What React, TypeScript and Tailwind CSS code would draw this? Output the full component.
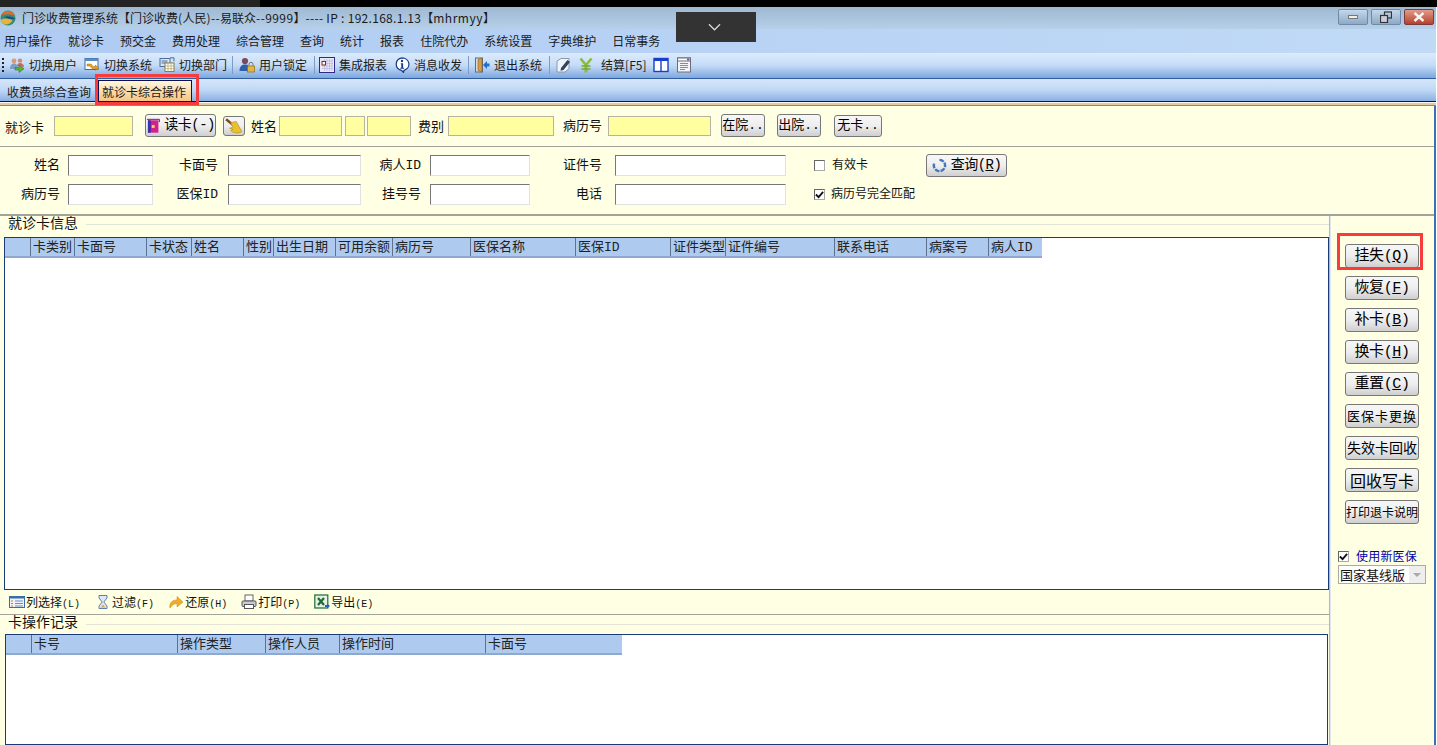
import type { ReactNode } from "react";

const menus = ["用户操作", "就诊卡", "预交金", "费用处理", "综合管理", "查询", "统计", "报表", "住院代办", "系统设置", "字典维护", "日常事务"];

const cardColumns = [
  { name: "", w: "w-[25px]" },
  { name: "卡类别", w: "w-[44px]" },
  { name: "卡面号", w: "w-[72px]" },
  { name: "卡状态", w: "w-[45px]" },
  { name: "姓名", w: "w-[52px]" },
  { name: "性别", w: "w-[30px]" },
  { name: "出生日期", w: "w-[62px]" },
  { name: "可用余额", w: "w-[57px]" },
  { name: "病历号", w: "w-[78px]" },
  { name: "医保名称", w: "w-[105px]" },
  { name: "医保ID", w: "w-[95px]" },
  { name: "证件类型", w: "w-[55px]" },
  { name: "证件编号", w: "w-[109px]" },
  { name: "联系电话", w: "w-[92px]" },
  { name: "病案号", w: "w-[62px]" },
  { name: "病人ID", w: "w-[54px]" },
];

const logColumns = [
  { name: "", w: "w-[25px]" },
  { name: "卡号", w: "w-[146px]" },
  { name: "操作类型", w: "w-[88px]" },
  { name: "操作人员", w: "w-[74px]" },
  { name: "操作时间", w: "w-[146px]" },
  { name: "卡面号", w: "w-[137px]" },
];

const sideButtons = [
  { text: "挂失", key: "Q" },
  { text: "恢复", key: "F" },
  { text: "补卡", key: "B" },
  { text: "换卡", key: "H" },
  { text: "重置", key: "C" },
];

const sideButtonsSmall = [
  { text: "医保卡更换", cls: "text-[13px] tracking-[1px]" },
  { text: "失效卡回收", cls: "text-[14px]" },
  { text: "回收写卡", cls: "text-[16px]" },
  { text: "打印退卡说明", cls: "text-[12px]" },
];

const mono = "font-['Liberation_Mono','Noto_Sans_CJK_SC',monospace]";

function Svg({ children, className = "w-4 h-4" }: { children: ReactNode; className?: string }) {
  return (
    <svg viewBox="0 0 16 16" className={`${className} shrink-0`}>
      {children}
    </svg>
  );
}

function Logo() {
  return (
    <svg viewBox="0 0 16 16" className="w-4 h-4 shrink-0">
      <circle cx="8" cy="8" r="7.500" fill="#2f8f7a" />
      <path d="M1 5 C5 -1 12 0 15.500 6 C10 3.500 6 4 1 5Z" fill="#e8692a" />
      <path d="M.5 10 C5 8 9 8 12.500 10.500 C9 16 3 16 .5 10Z" fill="#e9b23a" />
      <path d="M4 7 C8 5.500 12 6.500 15.500 9 C11 9.500 8 9 4 7Z" fill="#1e4f86" />
    </svg>
  );
}

const toolIcons: Record<string, ReactNode> = {
  user: (
    <Svg>
      <circle cx="5" cy="4" r="2.400" fill="#d99a78" />
      <circle cx="11" cy="3.600" r="2.200" fill="#d8876a" />
      <path d="M1 12c0-4 2-5.500 4-5.500s4 1.500 4 5.500z" fill="#7d9cc9" />
      <path d="M8 9c0-2 1.500-3 3-3s4 1 4 4z" fill="#c76a6a" />
      <path d="M6 10.500h4V8l5 3.800-5 3.700v-2.500H6z" fill="#58b23a" stroke="#2f7a1e" strokeWidth=".6" />
    </Svg>
  ),
  system: (
    <Svg>
      <rect x="1" y="1.500" width="13" height="11" fill="#fff" stroke="#3d6ea8" />
      <rect x="1" y="1.500" width="13" height="2.500" fill="#5b8cc4" />
      <path d="M3 7h4l2 2.500h3l-1-1.500 4 3-3.500 2.500.5-2H8L6 9H3z" fill="#e6a21d" stroke="#a86d0c" strokeWidth=".5" />
    </Svg>
  ),
  dept: (
    <Svg>
      <rect x="1" y="1.500" width="10" height="8" fill="#dbe6f4" stroke="#4a6f9e" />
      <path d="M2.500 4h6M2.500 6h6" stroke="#4a6f9e" />
      <rect x="6" y="6" width="9" height="8.500" fill="#fff" stroke="#8a7a3c" />
      <path d="M6 9h9M6 11.700h9M9 6v8.500M12 6v8.500" stroke="#b3a35e" strokeWidth=".7" />
      <path d="M11 .8h4v3.500" fill="none" stroke="#4a6f9e" />
    </Svg>
  ),
  lock: (
    <Svg>
      <circle cx="6" cy="4" r="3.100" fill="#7b4a5a" />
      <path d="M0.500 14c0-5 2.500-6.500 5.500-6.500 2 0 3 .5 3 .5v6z" fill="#2f5fa8" />
      <rect x="8.500" y="9" width="7" height="6" fill="#e8b63e" stroke="#8e6a12" strokeWidth=".7" />
      <path d="M10 9V7.300a2 2 0 0 1 4 0V9" fill="none" stroke="#777" />
    </Svg>
  ),
  report: (
    <Svg>
      <rect x=".5" y=".5" width="15" height="15" fill="#e9e9f8" stroke="#2e2a8c" />
      <path d="M3 4h11M3 6.500h11M3 9h11M3 11.500h11M5.500 2v12M8 2v12M10.500 2v12M13 2v12" stroke="#b9b9e0" strokeWidth=".8" />
      <rect x="3" y="4.500" width="3.500" height="3.500" fill="#fff" stroke="#a01c1c" />
    </Svg>
  ),
  info: (
    <Svg>
      <path d="M8 .8a7 6.400 0 0 1 2 12.500L9.500 15.500 7.500 13.300A7 6.400 0 0 1 8 .8z" fill="#fff" stroke="#123a86" strokeWidth="1.200" />
      <circle cx="8" cy="4" r="1.200" fill="#123a86" />
      <path d="M6.800 6.200h2.300v4.500h1v1H6.300v-1h1V7.200h-.5z" fill="#123a86" />
    </Svg>
  ),
  exit: (
    <Svg>
      <rect x="1.500" y="1" width="7" height="14" fill="#d5dde8" stroke="#5a6b80" />
      <path d="M4 2.500l4-1.500v14l-4-1.500z" fill="#d99c46" stroke="#8a5c1a" strokeWidth=".6" />
      <path d="M9 8l4-4v2.500h2.500v3H13V12z" fill="#1f6fd0" />
    </Svg>
  ),
  note: (
    <Svg>
      <path d="M2 4 6 1.500h8v10l-4 3.500H2z" fill="#eef3fa" stroke="#8a9ab0" />
      <path d="M6 11l6.500-8 2.500 2-6.500 8-3 .8z" fill="#33435e" />
    </Svg>
  ),
  yen: (
    <Svg>
      <path d="M2.500 1.500 8 8l5.500-6.500" fill="none" stroke="#8dbb3a" strokeWidth="2.600" />
      <path d="M8 7.500V15.500" stroke="#8dbb3a" strokeWidth="3" />
      <path d="M3.500 9h9M3.500 12h9" stroke="#7aa82c" strokeWidth="1.500" />
    </Svg>
  ),
  columns: (
    <Svg>
      <rect x="1" y="1.500" width="14" height="13" fill="#fff" stroke="#1740c8" strokeWidth="1.400" />
      <rect x="1" y="1.500" width="14" height="2.500" fill="#1740c8" />
      <path d="M8 1.500v13" stroke="#1740c8" strokeWidth="1.400" />
    </Svg>
  ),
  page: (
    <Svg>
      <rect x="1.500" y="1" width="13" height="14" fill="#f4f4f8" stroke="#6d6d78" />
      <rect x="1.500" y="1" width="13" height="3" fill="#fff" stroke="#6d6d78" />
      <rect x="11" y="1.500" width="2.500" height="2" fill="#6a58b0" />
      <path d="M4 6.500h8M4 8.500h8M4 10.500h8M4 12.500h5" stroke="#8a8a94" />
    </Svg>
  ),
};

const toolbar = [
  { icon: "user", text: "切换用户", cls: "ml-[9px]" },
  { icon: "system", text: "切换系统", cls: "ml-[7px]" },
  { icon: "dept", text: "切换部门", cls: "ml-[7px]" },
  { sep: true, cls: "ml-[5px]" },
  { icon: "lock", text: "用户锁定", cls: "ml-[6px]" },
  { sep: true, cls: "ml-[7px]" },
  { icon: "report", text: "集成报表", cls: "ml-[4px]" },
  { icon: "info", text: "消息收发", cls: "ml-[7px]" },
  { sep: true, cls: "ml-[6px]" },
  { icon: "exit", text: "退出系统", cls: "ml-[5px]" },
  { sep: true, cls: "ml-[7px]" },
  { icon: "note", cls: "ml-[5px]" },
  { icon: "yen", cls: "ml-[7px]" },
  { text: "结算[F5]", cls: "ml-[7px]" },
  { icon: "columns", cls: "ml-[6px]" },
  { icon: "page", cls: "ml-[7px]" },
];

function Btn({ className, children }: { className: string; children: ReactNode }) {
  return (
    <button className={`flex items-center justify-center shrink-0 whitespace-nowrap border border-[#777] rounded-[3px] bg-gradient-to-b from-[#f7f7f7] via-[#eeeeee] to-[#cfcfcf] text-black ${className}`}>
      {children}
    </button>
  );
}

function YellowInput({ className }: { className: string }) {
  return <div className={`h-5 shrink-0 bg-[#ffff9f] border border-[#b4b4a0] ${className}`} />;
}

function WhiteInput({ className }: { className: string }) {
  return <div className={`h-[21px] shrink-0 bg-white border border-[#e2e2e2] border-l-[#777] border-t-[#777] ${className}`} />;
}

function Label({ className, children }: { className: string; children: ReactNode }) {
  return <span className={`shrink-0 whitespace-nowrap text-right text-[13px] text-[#111] ${mono} ${className}`}>{children}</span>;
}

function Check({ checked }: { checked?: boolean }) {
  return (
    <span className="flex w-[11px] h-[11px] shrink-0 items-center justify-center bg-white border border-[#aaa] border-l-[#666] border-t-[#666]">
      {checked && (
        <svg viewBox="0 0 10 10" className="w-[9px] h-[9px]">
          <path d="M1 5l3 3 5-6" fill="none" stroke="#111" strokeWidth="2" />
        </svg>
      )}
    </span>
  );
}

function GridHeader({ columns }: { columns: { name: string; w: string }[] }) {
  return (
    <div className="flex w-fit h-5 border-b-2 border-[#8fa8cf]">
      {columns.map((c, i) => (
        <div key={i} className={`${c.w} shrink-0 h-full bg-[#aecbef] overflow-hidden whitespace-nowrap pl-[2px] text-[13px] leading-5 text-[#222] ${mono} ${i > 0 ? "border-l border-[#5d7290]" : ""}`}>
          {c.name}
        </div>
      ))}
    </div>
  );
}

function GroupTitle({ className, lift, children }: { className: string; lift: string; children: ReactNode }) {
  return (
    <div className={`flex items-center shrink-0 ${className}`}>
      <span className={`ml-2 mr-2 text-[14px] leading-none text-[#111] ${lift}`}>{children}</span>
      <div className="flex-1 h-px bg-[#e4e4d8]" />
    </div>
  );
}

function Action({ icon, text, k, cls }: { icon: ReactNode; text: string; k: string; cls: string }) {
  return (
    <div className={`flex items-center ${cls}`}>
      {icon}
      <span className="ml-[1px] text-[12px] text-[#111] whitespace-nowrap">
        {text}
        <span className={`${mono} text-[10px]`}>({k})</span>
      </span>
    </div>
  );
}

export default function App() {
  return (
    <div className="relative h-[745px] w-[1437px] overflow-hidden bg-white font-['Noto_Sans_CJK_SC',sans-serif]">
      <div className="flex h-[7px]">
        <div className="w-[260px] bg-[#232323]" />
        <div className="flex-1 bg-black" />
      </div>

      <div className="w-[1436px]">
        {/* title bar */}
        <div className="flex items-center h-[22px] bg-gradient-to-b from-[#9fb9d2] to-[#b7d0ea]">
          <Logo />
          <span className="ml-[6px] text-[12px] text-[#1a1a1a] whitespace-nowrap">
            门诊收费管理系统【门诊收费<span className="tracking-[0.4px]">(</span>人民<span className="tracking-[0.4px]">)--</span>易联众<span className="tracking-[0.4px]">--9999</span>】<span className="tracking-[0.3px]">---- IP : 192.168.1.13</span>【<span className="tracking-[0.5px]">mhrmyy</span>】
          </span>
          <div className="ml-auto mr-[2px] flex gap-[3px] self-start mt-[2px]">
            <div className="flex items-center justify-center w-[30px] h-[16px] rounded-[2px] border border-[#6f8aa6] bg-gradient-to-b from-[#c6d8ea] to-[#8ea9c5]">
              <div className="w-[10px] h-[4px] bg-[#eee] border border-[#777]" />
            </div>
            <div className="flex items-center justify-center w-[30px] h-[16px] rounded-[2px] border border-[#6f8aa6] bg-gradient-to-b from-[#c6d8ea] to-[#8ea9c5]">
              <svg viewBox="0 0 12 12" className="w-3 h-3">
                <rect x="4.500" y="1" width="7" height="6" fill="none" stroke="#333" strokeWidth="1.200" />
                <rect x=".5" y="4.500" width="7" height="7" fill="#ccd" stroke="#333" strokeWidth="1.200" />
              </svg>
            </div>
            <div className="flex items-center justify-center w-[30px] h-[16px] rounded-[2px] border border-[#7c3a3a] bg-gradient-to-b from-[#e39a8a] to-[#b3402c]">
              <svg viewBox="0 0 12 10" className="w-3 h-[10px]">
                <path d="M1.500 1l9 8M10.500 1l-9 8" stroke="#f4f4f4" strokeWidth="2.400" />
              </svg>
            </div>
          </div>
        </div>

        {/* menu */}
        <div className="flex items-center gap-4 h-6 pl-1 pb-[1px] bg-gradient-to-r from-[#afcbf3] to-[#c0daf6]">
          {menus.map((m) => (
            <span key={m} className="text-[12px] text-[#1a1a1a] whitespace-nowrap">{m}</span>
          ))}
        </div>

        {/* toolbar */}
        <div className="relative flex items-center h-[26px] pb-[1px] border-b border-[#2f5c9e] bg-gradient-to-b from-[#dcebfd] via-[#c4dbf7] to-[#7da7de]">
          <div className="absolute left-[2px] top-[5px] h-[14px] w-[2px] border-l-2 border-dotted border-[#223]" />
          {toolbar.map((t, i) =>
            t.sep ? (
              <div key={i} className={`w-px h-[18px] bg-[#7f9cc0] ${t.cls}`} />
            ) : (
              <div key={i} className={`flex items-center gap-1 ${t.cls}`}>
                {t.icon && toolIcons[t.icon]}
                {t.text && <span className="text-[12px] text-[#1a1a1a] whitespace-nowrap">{t.text}</span>}
              </div>
            ),
          )}
        </div>

        {/* tabs */}
        <div className="flex items-end h-[23px] pl-[7px] border-b border-[#10104c] bg-gradient-to-b from-[#d5e6fb] via-[#c0d8f6] to-[#8bb0e4]">
          <span className="w-[84px] h-5 text-[12px] leading-[22px] text-[#1a1a1a] whitespace-nowrap">收费员综合查询</span>
          <span className="ml-[7px] w-[94px] h-[21px] pl-[3px] text-[12px] leading-[21px] text-[#1a1a1a] whitespace-nowrap border border-b-0 border-[#10104c] bg-gradient-to-b from-[#fff6dc] to-[#f6c57f]">就诊卡综合操作</span>
        </div>
        <div className="h-[4px] bg-[#e6c8a2] border-t border-[#f6f6ee] border-b border-b-[#8a8a80]" />

        <div className="border-r-2 border-[#3d6fb4] bg-[#ffffe3]">
          {/* read card row */}
          <div className="flex items-center h-[41px] border-b border-[#a3a39b] pb-[1px]">
            <Label className="ml-[5px] w-[38px] translate-y-[3px]">就诊卡</Label>
            <YellowInput className="ml-[11px] w-[79px]" />
            <Btn className="ml-3 w-[71px] h-[23px] gap-[3px] text-[14px]">
              <svg viewBox="0 0 16 16" className="w-[17px] h-[18px]">
                <rect x="2" y="2" width="11" height="13" fill="#d41f8c" />
                <rect x="2" y="2" width="3" height="13" fill="#3a2fb0" />
                <path d="M1 1h13v3" fill="none" stroke="#333" />
                <rect x="6" y="7" width="3" height="3" fill="#f4e04d" />
              </svg>
              <span className={`${mono} tracking-[-0.5px]`}>读卡(-)</span>
            </Btn>
            <Btn className="ml-[7px] w-[22px] h-5">
              <svg viewBox="0 0 16 16" className="w-[18px] h-[18px]">
                <path d="M1 2l6 5" stroke="#7a4a1a" strokeWidth="2.200" />
                <path d="M5 5l5-1 5 9c-3 2-8 1.500-10-1l2-1-3-1 3-1z" fill="#e9c02f" stroke="#a5851a" strokeWidth=".5" />
              </svg>
            </Btn>
            <Label className="ml-[6px] w-[26px] translate-y-[2px]">姓名</Label>
            <YellowInput className="ml-[2px] w-[63px]" />
            <YellowInput className="ml-[3px] w-5" />
            <YellowInput className="ml-[2px] w-[44px]" />
            <Label className="ml-[7px] w-[26px] translate-y-[2px]">费别</Label>
            <YellowInput className="ml-1 w-[106px]" />
            <Label className="ml-[9px] w-[39px] translate-y-[1px]">病历号</Label>
            <YellowInput className="ml-[6px] w-[103px]" />
            <Btn className={`ml-[10px] w-[44px] h-[23px] text-[13px] ${mono}`}>在院..</Btn>
            <Btn className={`ml-3 w-[44px] h-[23px] text-[13px] ${mono}`}>出院..</Btn>
            <Btn className={`ml-[13px] w-[48px] h-[22px] text-[13px] ${mono}`}>无卡..</Btn>
          </div>

          {/* query rows */}
          <div className="flex flex-col gap-2 h-[69px] pt-2 border-b-2 border-[#a3a39b]">
            <div className="flex items-center h-[21px]">
              <Label className="w-[60px]">姓名</Label>
              <WhiteInput className="ml-2 w-[85px]" />
              <Label className="w-[65px]">卡面号</Label>
              <WhiteInput className="ml-[10px] w-[133px]" />
              <Label className="w-[60px]">病人ID</Label>
              <WhiteInput className="ml-[9px] w-[100px]" />
              <Label className="w-[72px]">证件号</Label>
              <WhiteInput className="ml-[13px] w-[171px]" />
              <span className="ml-7"><Check /></span>
              <span className={`ml-[7px] w-[94px] text-[12px] text-[#111] ${mono}`}>有效卡</span>
              <Btn className="w-[81px] h-[23px] gap-1 text-[14px]">
                <svg viewBox="0 0 16 16" className="w-[15px] h-[15px]">
                  <path d="M8 2a6 6 0 1 1-5.500 3.500" fill="none" stroke="#4477b8" strokeWidth="2.600" strokeDasharray="5 1.200" />
                </svg>
                <span className={`${mono} tracking-[-0.5px]`}>查询(<span className="underline">R</span>)</span>
              </Btn>
            </div>
            <div className="flex items-center h-[21px]">
              <Label className="w-[60px]">病历号</Label>
              <WhiteInput className="ml-2 w-[85px]" />
              <Label className="w-[65px]">医保ID</Label>
              <WhiteInput className="ml-[10px] w-[133px]" />
              <Label className="w-[60px]">挂号号</Label>
              <WhiteInput className="ml-[9px] w-[100px]" />
              <Label className="w-[72px]">电话</Label>
              <WhiteInput className="ml-[13px] w-[171px]" />
              <span className="ml-7"><Check checked /></span>
              <span className={`ml-[6px] text-[12px] text-[#111] whitespace-nowrap ${mono}`}>病历号完全匹配</span>
            </div>
          </div>

          {/* lower area */}
          <div className="flex h-[529px]">
            <div className="flex flex-col w-[1330px] border-r border-[#b8b8ac]">
              <GroupTitle className="h-[17px]" lift="-translate-y-[3px]">就诊卡信息</GroupTitle>
              <div className="mt-1 ml-1 w-[1325px] h-[353px] shrink-0 bg-white border border-[#1a3a78]">
                <GridHeader columns={cardColumns} />
              </div>
              <div className="flex items-center h-[25px] shrink-0 pl-[9px] border-b border-[#a3a39b]">
                <Action
                  cls=""
                  text="列选择"
                  k="L"
                  icon={
                    <Svg>
                      <rect x=".5" y="2.500" width="15" height="11" fill="#eef3fb" stroke="#3a6ea8" />
                      <rect x=".5" y="2.500" width="15" height="2" fill="#3a6ea8" />
                      <path d="M2 7h2M2 9.500h2M2 12h2" stroke="#d9801f" strokeWidth="1.200" />
                      <path d="M6 7h8M6 9.500h8M6 12h8" stroke="#6f8fb8" />
                    </Svg>
                  }
                />
                <Action
                  cls="ml-[15px]"
                  text="过滤"
                  k="F"
                  icon={
                    <Svg>
                      <path d="M4 1.500h8v2.500L8.800 8l3.200 4v2.500H4V12l3.200-4L4 4z" fill="#dfe8f4" stroke="#5f7fa8" />
                      <path d="M5.500 13.500 8 10.500l2.500 3z" fill="#e0a848" />
                    </Svg>
                  }
                />
                <Action
                  cls="ml-[14px]"
                  text="还原"
                  k="H"
                  icon={
                    <Svg>
                      <path d="M2 14c-1-5 2-8 7-8V2.500L15 8l-6 5V9.500c-3 0-5 1.500-7 4.500z" fill="#f0ac2b" stroke="#c98412" strokeWidth=".5" />
                    </Svg>
                  }
                />
                <Action
                  cls="ml-[14px]"
                  text="打印"
                  k="P"
                  icon={
                    <Svg>
                      <rect x="4" y="1" width="8" height="6" fill="#fff" stroke="#666" />
                      <rect x="1" y="7" width="14" height="5.500" rx="1" fill="#c8ccd4" stroke="#555" />
                      <rect x="3.500" y="10.500" width="9" height="4" fill="#fff" stroke="#555" />
                    </Svg>
                  }
                />
                <Action
                  cls="ml-[14px]"
                  text="导出"
                  k="E"
                  icon={
                    <Svg>
                      <rect x=".8" y="1" width="13" height="13" fill="#e4f1e4" stroke="#1d6b34" strokeWidth="1.200" />
                      <path d="M4 4l6 7M10 4l-6 7" stroke="#1d6b34" strokeWidth="2.200" />
                      <path d="M11 11h2V9.500l3 2.500-3 2.500V13h-2z" fill="#1f62b8" />
                    </Svg>
                  }
                />
              </div>
              <GroupTitle className="h-[19px]" lift="-translate-y-[4px]">卡操作记录</GroupTitle>
              <div className="ml-[5px] w-[1323px] flex-1 bg-white border border-[#1a3a78]">
                <GridHeader columns={logColumns} />
              </div>
            </div>

            {/* side buttons */}
            <div className="flex-1 flex flex-col pt-7 border-l border-[#dfe8f2]">
              <div className="flex flex-col gap-2 ml-[14px]">
                {sideButtons.map((b) => (
                  <Btn key={b.key} className={`w-[74px] h-6 pt-[2px] text-[15px] tracking-[-0.4px] ${mono}`}>
                    {b.text}(<span className="underline">{b.key}</span>)
                  </Btn>
                ))}
                {sideButtonsSmall.map((b) => (
                  <Btn key={b.text} className={`w-[74px] h-6 pb-[1px] ${b.cls}`}>
                    {b.text}
                  </Btn>
                ))}
              </div>
              <div className="flex items-center mt-[25px] ml-[7px] h-[14px]">
                <Check checked />
                <span className="ml-[7px] text-[12px] tracking-[0.2px] text-[#0000b0] whitespace-nowrap">使用新医保</span>
              </div>
              <div className="flex items-center justify-between mt-[2px] ml-[7px] w-[88px] h-[19px] bg-white border border-[#aaa] pl-[1px]">
                <span className="text-[13px] leading-none text-[#111] whitespace-nowrap">国家基线版</span>
                <span className="flex items-center justify-center w-[16px] h-full bg-[#eeeeee]">
                  <span className="w-0 h-0 border-x-4 border-t-4 border-x-transparent border-t-[#aaa]" />
                </span>
              </div>
            </div>
          </div>
        </div>
      </div>

      {/* remote-session drop tab sitting over the title bar */}
      <div className="absolute left-[676px] top-[12px] flex items-center justify-center w-20 h-[30px] pr-1 pb-[1px] bg-[#333333]">
        <svg viewBox="0 0 14 8" className="w-[13px] h-2">
          <path d="M1 1l6 6 6-6" fill="none" stroke="#d8d8d8" strokeWidth="1.400" />
        </svg>
      </div>

      {/* red annotation boxes */}
      <div className="absolute left-[95px] top-[74px] w-[104px] h-[31px] border-[3px] border-[#f83c3c]" />
      <div className="absolute left-[1337px] top-[233px] w-[86px] h-[37px] border-[3px] border-[#f83c3c]" />
    </div>
  );
}
